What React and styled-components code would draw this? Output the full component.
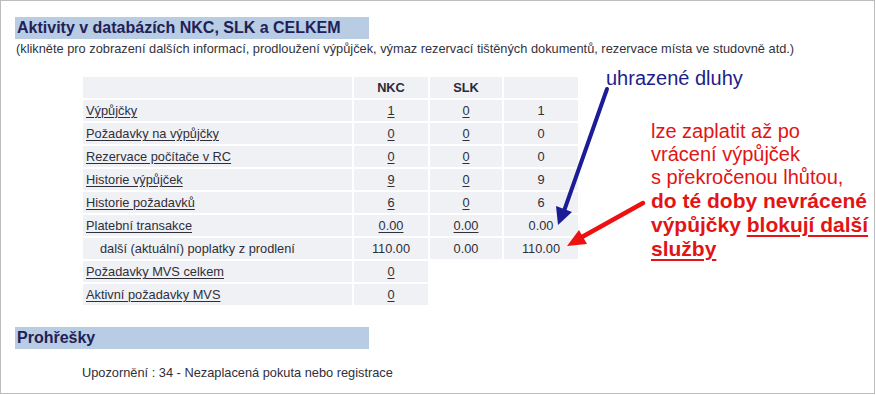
import React from 'react';
import styled, { createGlobalStyle } from 'styled-components';

const GlobalStyle = createGlobalStyle`
  html, body {
    margin: 0;
    padding: 0;
    background: #ffffff;
  }
  body {
    font-family: "Liberation Sans", Arial, sans-serif;
    color: #2f2f3a;
  }
`;

const Frame = styled.div`
  position: relative;
  box-sizing: border-box;
  width: 875px;
  height: 394px;
  border: 1px solid #bdbdbd;
  padding: 16px 14px 0;
`;

const SectionBar = styled.h2`
  margin: ${p => p.$top || 0}px 0 0;
  width: 354px;
  height: 22px;
  line-height: 22px;
  padding-left: 2px;
  box-sizing: border-box;
  background: #b8cce4;
  color: #1f2158;
  font-size: 16px;
  font-weight: bold;
`;

const Hint = styled.p`
  margin: 3px 0 0 1px;
  font-size: 12.8px;
  line-height: 14px;
  color: #33333d;
`;

const Table = styled.table`
  margin: 19px 0 0 66px;
  border-collapse: separate;
  border-spacing: 2px;
  font-size: 12.8px;
`;

const Cell = styled.td`
  height: 21px;
  padding: 0 3px 0 ${p => (p.$indent ? 17 : 3)}px;
  line-height: 21px;
  background: #eff1f5;
  color: #2f2f3a;
  text-align: ${p => (p.$num ? 'center' : 'left')};
  white-space: nowrap;
`;

const HeadCell = styled(Cell).attrs({ as: 'th' })`
  font-weight: bold;
  text-align: center;
  color: #2a2a3a;
`;

const CellLink = styled.a`
  color: inherit;
  text-decoration: underline;
  text-underline-offset: 2px;
`;

const Notice = styled.p`
  margin: 16px 0 0 67px;
  font-size: 12.8px;
  line-height: 15px;
  color: #2f2f3a;
`;

const Overlay = styled.svg`
  position: absolute;
  left: -1px;
  top: -1px;
  pointer-events: none;
`;

const Note = styled.div`
  position: absolute;
  left: ${p => p.$x}px;
  top: ${p => p.$y}px;
  font-size: 20px;
  line-height: 23px;
  color: ${p => p.$color};
  white-space: nowrap;
`;

const NoteStrong = styled.span`
  font-weight: bold;
  font-size: 21px;
`;

const NoteLink = styled.span`
  text-decoration: underline;
  text-decoration-thickness: 2px;
  text-underline-offset: 3px;
`;

const rows = [
  { label: 'Výpůjčky', nkc: '1', slk: '0', total: '1' },
  { label: 'Požadavky na výpůjčky', nkc: '0', slk: '0', total: '0' },
  { label: 'Rezervace počítače v RC', nkc: '0', slk: '0', total: '0' },
  { label: 'Historie výpůjček', nkc: '9', slk: '0', total: '9' },
  { label: 'Historie požadavků', nkc: '6', slk: '0', total: '6' },
  { label: 'Platební transakce', nkc: '0.00', slk: '0.00', total: '0.00' },
  { label: 'další (aktuální) poplatky z prodlení', nkc: '110.00', slk: '0.00', total: '110.00', plain: true },
  { label: 'Požadavky MVS celkem', nkc: '0', short: true },
  { label: 'Aktivní požadavky MVS', nkc: '0', short: true },
];

const App = () => (
  <>
    <GlobalStyle />
    <Frame>
      <SectionBar>Aktivity v databázích NKC, SLK a CELKEM</SectionBar>
      <Hint>
        (klikněte pro zobrazení dalších informací, prodloužení výpůjček, výmaz rezervací tištěných
        dokumentů, rezervace místa ve studovně atd.)
      </Hint>
      <Table>
        <colgroup>
          <col style={{ width: 269 }} />
          <col style={{ width: 74 }} />
          <col style={{ width: 72 }} />
          <col style={{ width: 74 }} />
        </colgroup>
        <thead>
          <tr>
            <HeadCell />
            <HeadCell>NKC</HeadCell>
            <HeadCell>SLK</HeadCell>
            <HeadCell />
          </tr>
        </thead>
        <tbody>
          {rows.map(r => (
            <tr key={r.label}>
              <Cell $indent={r.plain}>
                {r.plain ? r.label : <CellLink>{r.label}</CellLink>}
              </Cell>
              <Cell $num>{r.plain ? r.nkc : <CellLink>{r.nkc}</CellLink>}</Cell>
              {!r.short && (
                <>
                  <Cell $num>{r.plain ? r.slk : <CellLink>{r.slk}</CellLink>}</Cell>
                  <Cell $num>{r.total}</Cell>
                </>
              )}
            </tr>
          ))}
        </tbody>
      </Table>
      <SectionBar $top={20}>Prohřešky</SectionBar>
      <Notice>Upozornění : 34 - Nezaplacená pokuta nebo registrace</Notice>

      <Note $x={605} $y={66} $color="#1e1e8a">uhrazené dluhy</Note>
      <Note $x={650} $y={119} $color="#e21414">
        lze zaplatit až po
        <br />
        vrácení výpůjček
        <br />
        s překročenou lhůtou,
        <br />
        <NoteStrong>
          do té doby nevrácené
          <br />
          výpůjčky <NoteLink>blokují další</NoteLink>
          <br />
          <NoteLink>služby</NoteLink>
        </NoteStrong>
      </Note>

      <Overlay width="876" height="395" viewBox="0 0 876 395">
        <line x1="607" y1="89" x2="564" y2="211" stroke="#1c1c96" strokeWidth="4" strokeLinecap="round" />
        <polygon points="558,225 572,212 556,206" fill="#1c1c96" />
        <line x1="643" y1="203" x2="582" y2="237" stroke="#ee1111" strokeWidth="4.5" strokeLinecap="round" />
        <polygon points="567,246 587,244 579,230" fill="#ee1111" />
      </Overlay>
    </Frame>
  </>
);

export default App;
